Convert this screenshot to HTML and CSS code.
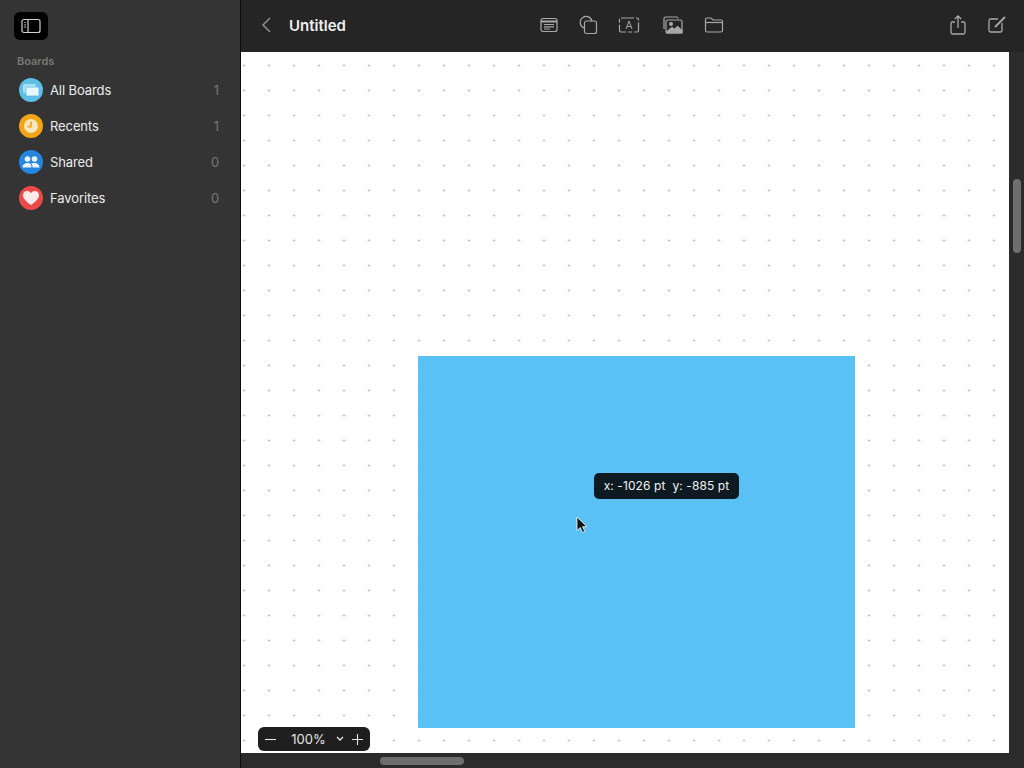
FILE: index.html
```html
<!DOCTYPE html>
<html lang="en">
<head>
<meta charset="UTF-8">
<title>Untitled</title>
<link rel="stylesheet" href="styles.css">
</head>
<body>
<div class="app">
  <aside class="sidebar">
    <button class="toggle">
      <svg width="20" height="16" viewBox="0 0 20 16" fill="none" stroke="#d0d0d0" stroke-width="1.2">
        <rect x="1" y="1.5" width="18" height="13" rx="2"/>
        <path d="M7 1.5v13M3.4 4.5h1.4M3.4 6.8h1.4M3.4 9.1h1.4"/>
      </svg>
    </button>
    <div class="section-title">Boards</div>
    <ul class="nav">
      <li class="nav-item">
        <span class="badge badge-blue">
          <svg width="18" height="16" viewBox="0 0 18 16">
            <rect x="1" y="2" width="13" height="9" rx="1.5" fill="#a9e0f6"/>
            <rect x="4" y="5" width="13" height="9" rx="1.5" fill="#e6f6fc" stroke="#5dbfe6" stroke-width=".8"/>
          </svg>
        </span>
        <span class="nav-label">All Boards</span><span class="nav-count">1</span>
      </li>
      <li class="nav-item">
        <span class="badge badge-orange">
          <svg width="16" height="16" viewBox="0 0 16 16">
            <circle cx="8" cy="8" r="7" fill="#fbe6bd"/>
            <path d="M8 3.5V8.6H4.6" fill="none" stroke="#f2a516" stroke-width="1.6"/>
          </svg>
        </span>
        <span class="nav-label">Recents</span><span class="nav-count">1</span>
      </li>
      <li class="nav-item">
        <span class="badge badge-azure">
          <svg width="18" height="14" viewBox="0 0 18 14" fill="#eaf4fd">
            <circle cx="5.5" cy="4" r="2.8"/>
            <circle cx="12.5" cy="4" r="2.8"/>
            <path d="M.5 12.5C.5 9.5 2.8 8 5.5 8s4 1 4 4.500zM10.500 12.500c0-1.800-.3-3-1.300-4 1-.4 2.200-.5 3.300-.5 2.700 0 5 1.500 5 4.500z"/>
          </svg>
        </span>
        <span class="nav-label">Shared</span><span class="nav-count">0</span>
      </li>
      <li class="nav-item">
        <span class="badge badge-red">
          <svg width="16" height="14" viewBox="0 0 16 14" fill="#fdeaea">
            <path d="M8 14C3 10.200 0 7.500 0 4.200 0 1.800 1.800 0 4.100 0 5.700 0 7.200.8 8 2.200 8.800.8 10.300 0 11.900 0 14.200 0 16 1.800 16 4.200 16 7.500 13 10.200 8 14z"/>
          </svg>
        </span>
        <span class="nav-label">Favorites</span><span class="nav-count">0</span>
      </li>
    </ul>
  </aside>

  <main class="main">
    <header class="topbar">
      <svg class="back" width="12" height="18" viewBox="0 0 12 18" fill="none" stroke="#8c8c8c" stroke-width="1.6">
        <path d="M10 2 3 9l7 7"/>
      </svg>
      <h1 class="title">Untitled</h1>
      <div class="tools">
        <svg width="18" height="16" viewBox="0 0 18 16" fill="none" stroke="#a8a8a8" stroke-width="1.2">
          <rect x="1" y="1.500" width="16" height="13" rx="2"/>
          <path d="M1 4.500h16" stroke-width="2"/>
          <path d="M4 7.500h10M4 9.800h10M4 12h6"/>
        </svg>
        <svg width="20" height="20" viewBox="0 0 20 20" fill="none" stroke="#a8a8a8" stroke-width="1.200">
          <path d="M6.500 13.200A6 6 0 1 1 14 6"/>
          <rect x="6.500" y="6" width="12" height="12.500" rx="2"/>
        </svg>
        <svg width="22" height="16" viewBox="0 0 22 16" fill="none" stroke="#a8a8a8" stroke-width="1.200">
          <rect x="1.500" y="1" width="19" height="14" rx="1.500" stroke-dasharray="13 2 4 2"/>
          <path d="M8 12 11 4l3 8M9 9.500h4" stroke-width="1"/>
        </svg>
        <svg class="tool-image" width="22" height="18" viewBox="0 0 22 18" fill="none" stroke="#a8a8a8" stroke-width="1.200">
          <path d="M3 13V2.500A1.500 1.500 0 0 1 4.500 1h11A1.500 1.500 0 0 1 17 2.500"/>
          <rect x="5" y="4" width="16" height="13" rx="1.500"/>
          <circle cx="10" cy="8" r="1.400" fill="#a8a8a8"/>
          <path d="M5.500 16 11 11.500l2.500 2 3-3 4.500 4V17H5.500z" fill="#a8a8a8"/>
        </svg>
        <svg width="20" height="16" viewBox="0 0 20 16" fill="none" stroke="#a8a8a8" stroke-width="1.200">
          <path d="M1.500 13.500V2.500A1.500 1.500 0 0 1 3 1h4l2 2h8a1.500 1.500 0 0 1 1.500 1.500v9A1.500 1.500 0 0 1 17 15H3a1.500 1.500 0 0 1-1.500-1.500z"/>
          <path d="M1.500 5.500h17"/>
        </svg>
      </div>
      <div class="actions">
        <svg width="16" height="20" viewBox="0 0 16 20" fill="none" stroke="#a8a8a8" stroke-width="1.300">
          <path d="M5 7H2.500A1.500 1.500 0 0 0 1 8.500v9A1.500 1.500 0 0 0 2.500 19h11a1.500 1.500 0 0 0 1.500-1.500v-9A1.500 1.500 0 0 0 13.500 7H11"/>
          <path d="M8 13V1M4.800 4 8 1l3.200 3"/>
        </svg>
        <svg width="18" height="18" viewBox="0 0 18 18" fill="none" stroke="#a8a8a8" stroke-width="1.300">
          <path d="M10 3H2.500A1.500 1.500 0 0 0 1 4.500v10A1.500 1.500 0 0 0 2.500 16h10a1.500 1.500 0 0 0 1.500-1.500V7"/>
          <path d="M7 11 17 1" stroke-width="1.800"/>
        </svg>
      </div>
    </header>

    <div class="workspace">
      <div class="canvas">
        <div class="shape"></div>
        <div class="coords">x: -1026 pt&nbsp; y: -885 pt</div>
        <svg class="cursor" width="12" height="18" viewBox="0 0 12 18">
          <path d="M1 1v13.500l3.300-3 2.200 5 2.300-1-2.200-4.800H11z" fill="#111" stroke="#fff" stroke-width=".8"/>
        </svg>
        <div class="zoom">
          <svg class="zoom-icon" width="11" height="11" viewBox="0 0 11 11" fill="none" stroke="#e6e6e6" stroke-width="1.100">
            <path d="M0 5.500h11"/>
          </svg>
          <span class="zoom-value">100%</span>
          <svg class="zoom-arrow" width="8" height="6" viewBox="0 0 8 6" fill="none" stroke="#e6e6e6" stroke-width="1.300">
            <path d="M1 1l3 3 3-3"/>
          </svg>
          <svg class="zoom-icon" width="11" height="11" viewBox="0 0 11 11" fill="none" stroke="#e6e6e6" stroke-width="1.100">
            <path d="M0 5.500h11M5.500 0v11"/>
          </svg>
        </div>
      </div>
      <div class="scroll-y"><div class="thumb-y"></div></div>
    </div>
    <div class="scroll-x"><div class="thumb-x"></div></div>
  </main>
</div>
</body>
</html>
```

FILE: styles.css
```css
* { box-sizing: border-box; }
html, body { height: 100%; }
body { margin: 0; font-family: Inter, "Liberation Sans", sans-serif; overflow: hidden; }
.app { display: flex; width: 1024px; height: 768px; }

.sidebar { width: 241px; background: #343434; border-right: 1px solid #0c0c0c; padding: 12px 0 0 14px; color: #ececec; }
.toggle { display: flex; align-items: center; justify-content: center; width: 34px; height: 28px; padding: 0; border: 0; border-radius: 6px; background: #000; }
.section-title { margin: 15px 0 0 3px; height: 12px; font-size: 11px; line-height: 12px; font-weight: 600; color: #777; }
.nav { list-style: none; margin: 5px 0 0; padding: 0; }
.nav-item { display: flex; align-items: center; height: 36px; padding-left: 5px; font-size: 13px; letter-spacing: -0.1px; }
.badge { display: flex; align-items: center; justify-content: center; flex: none; width: 24px; height: 24px; border-radius: 50%; }
.badge-blue { background: #5cbfe6; }
.badge-orange { background: #f2a516; }
.badge-azure { background: #2486e0; }
.badge-red { background: #ec4a4a; }
.nav-label { margin-left: 7px; flex: 1; }
.nav-count { width: 12px; margin-right: 21px; text-align: right; color: #777; }

.main { flex: 1; display: flex; flex-direction: column; min-width: 0; }
.topbar { position: relative; display: flex; align-items: center; height: 52px; padding: 0 0 2px 19px; background: #252525; }
.title { margin: 0 0 0 17px; font-size: 15px; font-weight: 600; color: #eee; }
.tools { position: absolute; left: 299px; top: 13px; display: flex; align-items: center; gap: 20px; height: 24px; }
.tool-image { margin: 0 1px; }
.actions { display: flex; align-items: center; gap: 22px; margin-left: auto; padding-right: 18px; }

.workspace { flex: 1; display: flex; min-height: 0; }
.canvas {
  position: relative;
  flex: 1;
  background-color: #fff;
  background-image: radial-gradient(circle, #c0c0c0 0.9px, transparent 1.3px);
  background-size: 25px 25px;
  background-position: 15.5px 1px;
}
.shape { position: absolute; left: 177px; top: 304px; width: 437px; height: 372px; background: #5ac1f5; }
.coords { position: absolute; left: 353px; top: 421px; width: 145px; height: 26px; border-radius: 5px; background: #0e1a22; color: #f2f2f2; font-size: 12px; font-weight: 400; letter-spacing: 0.1px; line-height: 26px; text-align: center; white-space: nowrap; }
.cursor { position: absolute; left: 335px; top: 464px; }
.zoom { position: absolute; left: 17px; top: 675px; display: flex; align-items: center; width: 112px; height: 24px; padding: 0 7px 0 7px; border-radius: 6px; background: #1e1e1e; color: #e6e6e6; font-size: 13px; }
.zoom-icon { flex: none; }
.zoom-value { width: 58px; margin-left: 6px; text-align: center; }
.zoom-arrow { flex: none; margin: 0 8px 0 1px; }

.scroll-y { width: 15px; background: #2b2b2b; padding: 127px 0 0 4px; }
.thumb-y { width: 8px; height: 74px; border-radius: 4px; background: #6e6e6e; }
.scroll-x { height: 15px; background: #2b2b2b; padding: 4px 0 0 139px; }
.thumb-x { width: 84px; height: 8px; border-radius: 4px; background: #6e6e6e; }
```
